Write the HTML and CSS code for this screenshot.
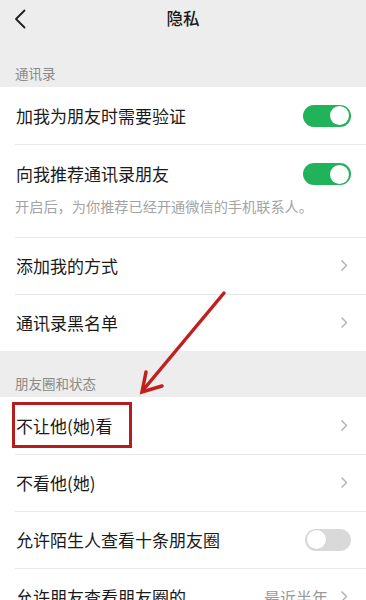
FILE: index.html
```html
<!DOCTYPE html>
<html lang="zh">
<head>
<meta charset="utf-8">
<title>隐私</title>
<link rel="stylesheet" href="styles.css">
</head>
<body>
<div class="page">
  <header class="nav">
    <span class="nav-back">
      <svg width="12" height="20" viewBox="0 0 12 20"><polyline points="10.5,1.5 2,10 10.5,18.5" fill="none" stroke="#1f1f1f" stroke-width="1.8" stroke-linecap="round" stroke-linejoin="round"/></svg>
    </span>
    <h1 class="nav-title">隐私</h1>
    <span class="nav-side"></span>
  </header>

  <div class="section-label section-first">通讯录</div>
  <div class="group">
    <div class="row">
      <span class="row-text">加我为朋友时需要验证</span>
      <span class="switch on"><span class="knob"></span></span>
    </div>
    <div class="row row-tall">
      <div class="row-main">
        <span class="row-text">向我推荐通讯录朋友</span>
        <span class="switch on"><span class="knob"></span></span>
      </div>
      <div class="row-sub">开启后，为你推荐已经开通微信的手机联系人。</div>
    </div>
    <div class="row">
      <span class="row-text">添加我的方式</span>
      <svg class="chev" width="8" height="13" viewBox="0 0 8 13"><polyline points="1.5,1.5 6.5,6.5 1.5,11.5" fill="none" stroke="#b4b4b4" stroke-width="1.5" stroke-linejoin="round"/></svg>
    </div>
    <div class="row">
      <span class="row-text">通讯录黑名单</span>
      <svg class="chev" width="8" height="13" viewBox="0 0 8 13"><polyline points="1.5,1.5 6.5,6.5 1.5,11.5" fill="none" stroke="#b4b4b4" stroke-width="1.5" stroke-linejoin="round"/></svg>
    </div>
  </div>

  <div class="section-label">朋友圈和状态</div>
  <div class="group">
    <div class="row row-marked">
      <span class="row-text">不让他(她)看</span>
      <svg class="chev" width="8" height="13" viewBox="0 0 8 13"><polyline points="1.5,1.5 6.5,6.5 1.5,11.5" fill="none" stroke="#b4b4b4" stroke-width="1.5" stroke-linejoin="round"/></svg>
      <span class="mark-box"></span>
    </div>
    <div class="row">
      <span class="row-text">不看他(她)</span>
      <svg class="chev" width="8" height="13" viewBox="0 0 8 13"><polyline points="1.5,1.5 6.5,6.5 1.5,11.5" fill="none" stroke="#b4b4b4" stroke-width="1.5" stroke-linejoin="round"/></svg>
    </div>
    <div class="row">
      <span class="row-text">允许陌生人查看十条朋友圈</span>
      <span class="switch off"><span class="knob"></span></span>
    </div>
    <div class="row">
      <span class="row-text">允许朋友查看朋友圈的</span>
      <span class="row-right">
        <span class="row-value">最近半年</span>
        <svg class="chev" width="8" height="13" viewBox="0 0 8 13"><polyline points="1.5,1.5 6.5,6.5 1.5,11.5" fill="none" stroke="#b4b4b4" stroke-width="1.5" stroke-linejoin="round"/></svg>
      </span>
    </div>
  </div>

  <svg class="arrow" width="366" height="600" viewBox="0 0 366 600">
    <line x1="224" y1="293" x2="144" y2="389" stroke="#c1201c" stroke-width="3.5" stroke-linecap="round"/>
    <polyline points="146,372 142,392 162,386" fill="none" stroke="#c1201c" stroke-width="3.5" stroke-linecap="round" stroke-linejoin="miter"/>
  </svg>
</div>
</body>
</html>
```

FILE: styles.css
```css
* {
  box-sizing: border-box;
  margin: 0;
  padding: 0;
}

html, body {
  width: 366px;
  height: 600px;
  overflow: hidden;
  background: #ffffff;
}

body {
  font-family: "Noto Sans CJK SC", "Noto Sans", sans-serif;
  color: #1c1c1c;
}

.page {
  position: relative;
  width: 366px;
}

.nav {
  display: grid;
  grid-template-columns: 60px 1fr 60px;
  align-items: center;
  height: 36px;
  background: #ededed;
}

.nav-back {
  display: flex;
  align-items: center;
  padding-left: 14px;
  padding-top: 1px;
}

.nav-title {
  text-align: center;
  font-size: 16.5px;
  font-weight: 500;
  color: #1a1a1a;
  line-height: 22px;
}

.section-label {
  background: #ededed;
  color: #8a8a8a;
  font-size: 13.5px;
  line-height: 20px;
  padding: 22px 15px 4px;
}

.section-first {
  padding-top: 27px;
}

.group {
  background: #ffffff;
}

.row {
  position: relative;
  display: flex;
  align-items: center;
  justify-content: space-between;
  height: 57px;
  padding: 0 15px 0 16px;
}

.row + .row::before {
  content: "";
  position: absolute;
  top: 0;
  left: 15px;
  right: 0;
  height: 1px;
  background: #e8e8e8;
}

.row-text {
  font-size: 17px;
  line-height: 22px;
  color: #1a1a1a;
}

.row-tall {
  height: 93px;
  flex-direction: column;
  align-items: stretch;
  justify-content: flex-start;
  padding-top: 18px;
}

.row-main {
  display: flex;
  align-items: center;
  justify-content: space-between;
  height: 24px;
}

.row-sub {
  margin-top: 11px;
  font-size: 14.2px;
  line-height: 18px;
  color: #a3a3a3;
  margin-left: -1px;
  white-space: nowrap;
}

.chev {
  margin-right: 3px;
  flex: none;
}

.row-right {
  display: flex;
  align-items: center;
  gap: 12px;
}

.row-value {
  font-size: 16px;
  line-height: 22px;
  color: #9a9a9a;
}

.switch {
  position: relative;
  display: block;
  width: 48px;
  height: 22px;
  border-radius: 11px;
  flex: none;
}

.switch.on {
  background: #20b35a;
}

.switch.off {
  background: #d9d9d9;
  width: 46px;
}

.knob {
  position: absolute;
  top: 1.5px;
  width: 19px;
  height: 19px;
  border-radius: 50%;
  background: #ffffff;
}

.switch.on .knob {
  right: 2px;
}

.switch.off .knob {
  left: 2px;
  box-shadow: 0 0 0 0.5px #cfcfcf;
}

.mark-box {
  position: absolute;
  left: 12px;
  top: 5px;
  width: 120px;
  height: 46px;
  border: 3px solid #b41f1e;
  pointer-events: none;
}

.arrow {
  position: absolute;
  left: 0;
  top: 0;
  pointer-events: none;
}
```
